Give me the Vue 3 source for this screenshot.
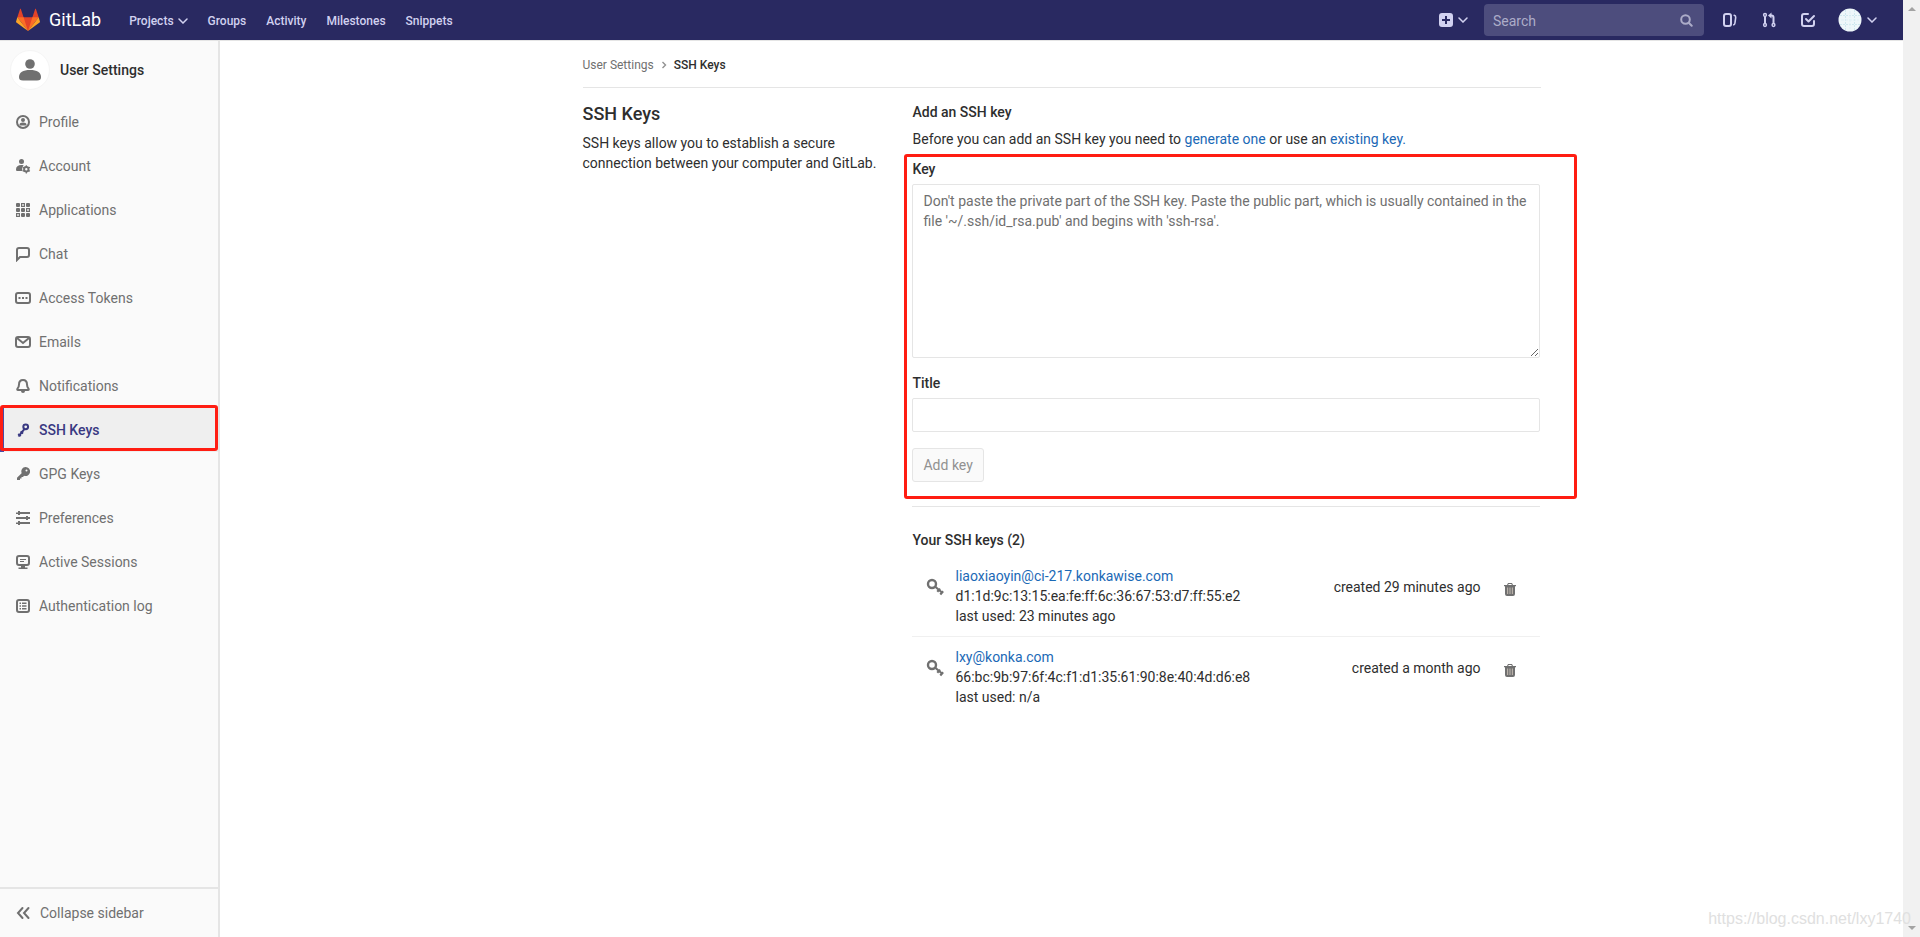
<script setup>
const navLinks = ['Groups', 'Activity', 'Milestones', 'Snippets']

const sections = [
  { icon: 'profile', label: 'Profile' },
  { icon: 'account', label: 'Account' },
  { icon: 'applications', label: 'Applications' },
  { icon: 'chat', label: 'Chat' },
  { icon: 'token', label: 'Access Tokens' },
  { icon: 'mail', label: 'Emails' },
  { icon: 'bell', label: 'Notifications' },
  { icon: 'key', label: 'SSH Keys', active: true },
  { icon: 'key-solid', label: 'GPG Keys' },
  { icon: 'preferences', label: 'Preferences' },
  { icon: 'monitor', label: 'Active Sessions' },
  { icon: 'log', label: 'Authentication log' },
]

const keys = [
  {
    title: 'liaoxiaoyin@ci-217.konkawise.com',
    fingerprint: 'd1:1d:9c:13:15:ea:fe:ff:6c:36:67:53:d7:ff:55:e2',
    used: '23 minutes ago',
    created: '29 minutes ago',
  },
  {
    title: 'lxy@konka.com',
    fingerprint: '66:bc:9b:97:6f:4c:f1:d1:35:61:90:8e:40:4d:d6:e8',
    used: 'n/a',
    created: 'a month ago',
  },
]
</script>

<template>
  <div class="window">
    <div class="page">
      <header class="navbar">
        <a class="brand" href="#">
          <svg width="24" height="24" viewBox="0 0 36 36" aria-hidden="true">
            <path fill="#e24329" d="M2 14l9.38 9v-9l-4-12.28c-.205-.632-1.176-.632-1.38 0z" />
            <path fill="#e24329" d="M34 14l-9.38 9v-9l4-12.28c.205-.632 1.176-.632 1.38 0z" />
            <path fill="#e24329" d="M18 34.38 3 14h30z" />
            <path fill="#fc6d26" d="M18 34.38 11.38 14H2l6 7.5zM18 34.38 24.62 14H34l-6 7.5z" />
            <path fill="#fca326" d="M2 14 .1 20.16c-.18.565 0 1.2.5 1.56l17.42 12.66zM34 14l1.9 6.16c.18.565 0 1.2-.5 1.56L18 34.38z" />
          </svg>
          <span>GitLab</span>
        </a>
        <nav class="main-links" aria-label="Main">
          <button type="button" class="nav-button">
            Projects
            <svg class="caret" width="10" height="6" viewBox="0 0 10 6" aria-hidden="true"><path d="M1 1l4 4 4-4" /></svg>
          </button>
          <a v-for="link in navLinks" :key="link" href="#">{{ link }}</a>
        </nav>
        <div class="tools">
          <button type="button" class="nav-button new" aria-label="New">
            <svg width="14" height="14" viewBox="0 0 14 14" aria-hidden="true">
              <path fill="#d1d1f0" fill-rule="evenodd" d="M3 0h8a3 3 0 0 1 3 3v8a3 3 0 0 1-3 3H3a3 3 0 0 1-3-3V3a3 3 0 0 1 3-3zm3 6H3v2h3v3h2V8h3V6H8V3H6z" />
            </svg>
            <svg class="caret" width="10" height="6" viewBox="0 0 10 6" aria-hidden="true"><path d="M1 1l4 4 4-4" /></svg>
          </button>
          <form class="search" @submit.prevent>
            <input type="text" placeholder="Search" aria-label="Search" />
            <svg width="13" height="13" viewBox="0 0 13 13" aria-hidden="true" fill="none" stroke="#acacc8" stroke-width="2">
              <circle cx="5.5" cy="5.5" r="4.3" /><path d="M8.7 8.7l3 3" stroke-linecap="round" />
            </svg>
          </form>
          <div class="shortcuts">
            <a href="#" aria-label="Issues">
              <svg width="16" height="16" viewBox="0 0 16 16" fill="none" stroke="#d1d1f0" stroke-width="2" stroke-linecap="round" aria-hidden="true">
                <rect x="2" y="2" width="7" height="12" rx="2" /><path d="M12.2 3.3c1.2.3 1.6 1 1.5 2.200L13 10.700c-.1 1.100-.5 1.800-1.200 2.100" stroke-width="1.600" />
              </svg>
            </a>
            <a href="#" aria-label="Merge requests">
              <svg width="16" height="16" viewBox="0 0 16 16" fill="none" stroke="#d1d1f0" stroke-width="1.5" aria-hidden="true">
                <circle cx="4" cy="3" r="1.4" /><circle cx="4" cy="13" r="1.4" /><circle cx="12.500" cy="13" r="1.4" />
                <path d="M4 4.500v7M12.500 11.500V5.500a2 2 0 0 0-2-2H9" stroke-width="2" /><path fill="#d1d1f0" stroke="none" d="M10.500.500v6l-3.500-3z" />
              </svg>
            </a>
            <a href="#" aria-label="Todos">
              <svg width="16" height="16" viewBox="0 0 16 16" fill="none" stroke="#d1d1f0" stroke-width="2" stroke-linecap="round" stroke-linejoin="round" aria-hidden="true">
                <path d="M8 2H4a2 2 0 0 0-2 2v8a2 2 0 0 0 2 2h8a2 2 0 0 0 2-2V9" /><path d="M6 7l2.500 2.500L14 4" />
              </svg>
            </a>
          </div>
          <button type="button" class="nav-button user" aria-label="Account menu">
            <svg width="24" height="24" viewBox="0 0 24 24" aria-hidden="true">
              <circle cx="12" cy="12" r="11.500" fill="#eef7fa" />
              <path stroke="#cfe8ef" stroke-dasharray="2 1" d="M7.500 2v20M16.500 2v20M2 7.500h20M2 16.500h20" />
              <path stroke="#dff0f5" stroke-dasharray="3 1" d="M12 3v18M3 12h18" />
            </svg>
            <svg class="caret" width="10" height="6" viewBox="0 0 10 6" aria-hidden="true"><path d="M1 1l4 4 4-4" /></svg>
          </button>
        </div>
      </header>

      <div class="body">
        <aside class="sidebar">
          <a class="context" href="#">
            <span class="avatar">
              <svg width="22" height="22" viewBox="0 0 22 22" fill="#707070" aria-hidden="true">
                <circle cx="11" cy="5" r="4.800" /><path d="M0 18c0-4.500 4-7 11-7s11 2.500 11 7c0 2.500-1 3.500-4 3.500H4c-3 0-4-1-4-3.500z" />
              </svg>
            </span>
            User Settings
          </a>
          <ul class="sections">
            <li v-for="item in sections" :key="item.label">
              <a href="#" :class="{ active: item.active }">
                <svg width="16" height="16" viewBox="0 0 16 16" aria-hidden="true">
                  <template v-if="item.icon === 'profile'">
                    <circle class="line" cx="8" cy="8" r="6" /><circle cx="8" cy="6" r="2" />
                    <path d="M4.500 10.500C4.500 9.200 5.800 8.500 8 8.500s3.500.7 3.500 2c0 .8-.4 1-1 1h-5c-.6 0-1-.2-1-1z" />
                  </template>
                  <template v-else-if="item.icon === 'account'">
                    <circle cx="6.500" cy="3.500" r="2.500" />
                    <path d="M1 11.500C1 8.500 3 7 6.300 7c1 0 1.700.1 2.400.4C7.400 8.500 6.800 10.500 7.500 13H2.500c-1 0-1.500-.5-1.500-1.500z" />
                    <circle class="line" cx="11.300" cy="11.300" r="2.200" />
                    <path class="line thin" d="M11.300 7.200v1.500M11.300 13.900v1.500M7.700 9.300l1.300.7M13.600 12.600l1.300.7M7.700 13.300l1.300-.7M13.600 10l1.300-.7" />
                  </template>
                  <template v-else-if="item.icon === 'applications'">
                    <rect x="1" y="1" width="4" height="4" rx="1" /><rect class="line thin" x="6.600" y="1.600" width="2.800" height="2.800" /><rect x="11" y="1" width="4" height="4" rx="1" />
                    <rect x="1" y="6" width="4" height="4" rx="1" /><rect x="6" y="6" width="4" height="4" rx="1" /><rect class="line thin" x="11.600" y="6.600" width="2.800" height="2.800" />
                    <rect class="line thin" x="1.600" y="11.600" width="2.800" height="2.800" /><rect x="6" y="11" width="4" height="4" rx="1" /><rect x="11" y="11" width="4" height="4" rx="1" />
                  </template>
                  <path v-else-if="item.icon === 'chat'" class="line" d="M2 14V4a2 2 0 0 1 2-2h8a2 2 0 0 1 2 2v5a2 2 0 0 1-2 2H5z" />
                  <template v-else-if="item.icon === 'token'">
                    <rect class="line" x="1" y="3" width="14" height="10" rx="2" /><path d="M3.500 7h2v2h-2zM7 7h2v2H7zM10.500 7h2v2h-2z" />
                  </template>
                  <template v-else-if="item.icon === 'mail'">
                    <rect class="line" x="1" y="3" width="14" height="10" rx="2" /><path class="line" d="M2 4l6 5 6-5" />
                  </template>
                  <template v-else-if="item.icon === 'bell'">
                    <path class="line" d="M8 2C5.500 2 4 4 4 6.500c0 2-.5 3-1.500 4.200-.5.600-.300 1.300.500 1.300h10c.8 0 1-.7.500-1.300-1-1.200-1.500-2.200-1.500-4.200C12 4 10.500 2 8 2z" />
                    <path d="M6 13h4a2 2 0 0 1-4 0z" />
                  </template>
                  <template v-else-if="item.icon === 'key'">
                    <circle class="line" cx="10.700" cy="4.800" r="2.400" /><path class="line" d="M9.500 6.800L3.500 14.500M5.500 9.500l2.600 2M3.200 12l2.600 2" />
                  </template>
                  <template v-else-if="item.icon === 'key-solid'">
                    <path fill-rule="evenodd" d="M10.500 1a4.500 4.500 0 1 1-1.500 8.700L8 11H6.500v1.500H5V14H2V11.800l4.600-4.600A4.500 4.500 0 0 1 10.500 1zm1 2.500a1 1 0 1 0 0 2 1 1 0 0 0 0-2z" />
                  </template>
                  <path v-else-if="item.icon === 'preferences'" d="M5 2h10v2H5v1H3V4H1V2.600h2V1h2zM11 7V6h2v1h2v2h-2v1h-2V9H1V7zM5 12h10v2H5v1H3v-1H1v-1.400h2V11h2z" />
                  <template v-else-if="item.icon === 'monitor'">
                    <rect class="line" x="2" y="2" width="12" height="9" rx="2" /><path d="M5 5h6v1H5zM5 7h4v1H5zM6 12h4v1.500h2.500V15h-9v-1.500H6z" />
                  </template>
                  <template v-else>
                    <rect class="line" x="2" y="2" width="12" height="12" rx="2" />
                    <path d="M4.500 4.500H6V6H4.500zM7 4.500h4.500V6H7zM4.500 7.300H6v1.500H4.500zM7 7.300h4.500v1.500H7zM4.500 10H6v1.500H4.500zM7 10h4.500v1.500H7z" />
                  </template>
                </svg>
                {{ item.label }}
              </a>
              <span v-if="item.active" class="mark"></span>
            </li>
          </ul>
          <button type="button" class="collapse">
            <svg width="16" height="16" viewBox="0 0 16 16" aria-hidden="true"><path class="line" stroke-linecap="round" d="M7.500 3L3 8l4.500 5M13.500 3L9 8l4.500 5" /></svg>
            Collapse sidebar
          </button>
        </aside>

        <main class="content">
          <div class="container">
            <nav class="breadcrumbs" aria-label="Breadcrumb">
              <a href="#">User Settings</a>
              <svg width="6" height="8" viewBox="0 0 6 8" aria-hidden="true"><path d="M1.500 1l3 3-3 3" fill="none" stroke="#919191" stroke-width="1.400" /></svg>
              <a class="current" href="#">SSH Keys</a>
            </nav>
            <div class="columns">
              <section class="intro">
                <h1>SSH Keys</h1>
                <p>SSH keys allow you to establish a secure connection between your computer and GitLab.</p>
              </section>
              <section class="settings">
                <h2>Add an SSH key</h2>
                <p class="hint">Before you can add an SSH key you need to <a href="#">generate one</a> or use an <a href="#">existing key.</a></p>
                <form class="key-form" @submit.prevent>
                  <label for="key">Key</label>
                  <textarea id="key" placeholder="Don't paste the private part of the SSH key. Paste the public part, which is usually contained in the file '~/.ssh/id_rsa.pub' and begins with 'ssh-rsa'."></textarea>
                  <label for="title">Title</label>
                  <input id="title" type="text" />
                  <button type="submit" disabled>Add key</button>
                  <span class="mark"></span>
                </form>
                <hr />
                <h2>Your SSH keys (2)</h2>
                <ul class="keys">
                  <li v-for="entry in keys" :key="entry.fingerprint">
                    <svg class="key-icon" width="18" height="18" viewBox="0 0 18 18" fill="none" stroke="#707070" aria-hidden="true">
                      <circle cx="6" cy="6" r="4" stroke-width="2.400" /><path stroke-width="2.200" d="M9 8.500l7.500 6.500M11.300 13.800l2.800-3.200M14.300 16.500l2.800-3.200" />
                    </svg>
                    <div class="info">
                      <a href="#">{{ entry.title }}</a>
                      <div>{{ entry.fingerprint }}</div>
                      <div>last used: {{ entry.used }}</div>
                    </div>
                    <span class="created">created {{ entry.created }}</span>
                    <button type="button" aria-label="Remove">
                      <svg width="12" height="13" viewBox="0 0 12 13" aria-hidden="true">
                        <path fill="#b8b0a8" d="M3 4h6v7H3z" />
                        <path fill="#707070" fill-rule="evenodd" d="M4 0h4l1 2h3v1.300h-1V11a2 2 0 0 1-2 2H3a2 2 0 0 1-2-2V3.300H0V2h3zm.6 1l-.4 1h3.600l-.4-1zM3 4.500V11h1.200V4.500zm2.400 0V11h1.200V4.500zm2.400 0V11H9V4.500z" />
                      </svg>
                    </button>
                  </li>
                </ul>
              </section>
            </div>
          </div>
        </main>
      </div>
    </div>
    <div class="scrollbar" aria-hidden="true"><i class="up"></i><i class="down"></i></div>
    <div class="watermark">https://blog.csdn.net/lxy1740</div>
  </div>
</template>

<style>
body {
  margin: 0;
}
</style>

<style scoped>
.window {
  display: flex;
  min-height: 100vh;
  position: relative;
  font: 14px/20px Roboto, "Noto Sans", sans-serif;
  color: #2e2e2e;
  background: #fff;
}
.window *,
.window *::before {
  box-sizing: border-box;
}
a {
  color: #1b69b6;
  text-decoration: none;
}
button,
input,
textarea {
  font: inherit;
}
button {
  cursor: pointer;
}
ul {
  list-style: none;
  margin: 0;
  padding: 0;
}
svg {
  flex: none;
}
.page {
  flex: 1;
  min-width: 0;
  display: flex;
  flex-direction: column;
}
.navbar {
  height: 40px;
  padding: 0 26px 0 16px;
  display: flex;
  align-items: center;
  background: #292961;
}
.brand {
  display: flex;
  align-items: center;
  gap: 9px;
  color: #fff;
  font-size: 18px;
}
.main-links {
  display: flex;
  align-items: center;
  gap: 20px;
  margin-left: 28px;
  padding-top: 1px;
  font-size: 12px;
  font-weight: 500;
}
.main-links a,
.nav-button {
  color: #d1d1f0;
}
.nav-button {
  display: flex;
  align-items: center;
  gap: 5px;
  padding: 0;
  border: 0;
  background: none;
}
.main-links .nav-button {
  gap: 4px;
}
.caret path {
  fill: none;
  stroke: #d1d1f0;
  stroke-width: 1.5;
  stroke-linecap: round;
}
.tools {
  display: flex;
  align-items: center;
  margin-left: auto;
}
.search {
  display: flex;
  align-items: center;
  width: 220px;
  height: 32px;
  margin: 0 18px 0 16px;
  padding: 0 11px 0 9px;
  border-radius: 4px;
  background: #4d4d7d;
}
.search input {
  flex: 1;
  min-width: 0;
  padding: 1px 0 0;
  border: 0;
  outline: 0;
  background: none;
  color: #fff;
}
.search input::placeholder {
  color: #acacc8;
  opacity: 1;
}
.shortcuts {
  display: flex;
  gap: 23px;
}
.shortcuts a {
  display: flex;
}
.user {
  margin-left: 22px;
}
.body {
  flex: 1;
  display: flex;
  border-top: 1px solid #e5e5e5;
}
.sidebar {
  flex: none;
  width: 220px;
  display: flex;
  flex-direction: column;
  border-right: 2px solid #e5e5e5;
  background: #fafafa;
}
.context {
  display: flex;
  align-items: center;
  gap: 10px;
  height: 58px;
  margin-bottom: 1px;
  padding-left: 10px;
  color: #2e2e2e;
  font-weight: 500;
}
.avatar {
  display: grid;
  place-items: center;
  width: 40px;
  height: 40px;
  border: 1px solid #f5f5f5;
  border-radius: 50%;
  background: #fff;
}
.sections li {
  position: relative;
}
.sections a {
  display: flex;
  align-items: center;
  gap: 8px;
  height: 44px;
  padding-left: 15px;
  color: #707070;
}
.sections svg,
.collapse svg {
  fill: currentColor;
}
.line {
  fill: none;
  stroke: currentColor;
  stroke-width: 2;
}
.thin {
  stroke-width: 1.2;
}
.sections .active {
  background: #efefef;
  color: #393982;
  font-weight: 500;
  box-shadow: inset 4px 0 #4b4ba3;
}
.mark {
  position: absolute;
  border: 3px solid #ff1d12;
  border-radius: 3px;
  pointer-events: none;
}
.sections .mark {
  inset: -3px 0 1px 0;
}
.collapse {
  display: flex;
  align-items: center;
  gap: 9px;
  height: 50px;
  margin-top: auto;
  padding: 0 0 0 15px;
  border: 0;
  border-top: 2px solid #e5e5e5;
  background: none;
  color: #707070;
}
.content {
  flex: 1;
  min-width: 0;
}
.container {
  max-width: 990px;
  margin: 0 auto;
  padding: 0 16px;
  box-sizing: border-box;
}
.breadcrumbs {
  display: flex;
  align-items: center;
  gap: 7px;
  height: 47px;
  padding-top: 2px;
  border-bottom: 1px solid #e5e5e5;
  font-size: 12px;
}
.breadcrumbs a {
  color: #707070;
}
.breadcrumbs .current {
  color: #2e2e2e;
  font-weight: 500;
}
.columns {
  display: flex;
  margin: 0 -16px;
}
.columns > section {
  padding: 14px 16px 0;
}
.intro {
  width: 33.3333%;
}
.settings {
  width: 66.6667%;
}
h1 {
  margin: 0;
  font-size: 18px;
  line-height: 24px;
  font-weight: 500;
}
h2 {
  margin: 0;
  font-size: 14px;
  font-weight: 500;
}
.intro p {
  margin: 7px 0 0;
}
.hint {
  margin: 7px 0 0;
}
.key-form {
  position: relative;
  display: flex;
  flex-direction: column;
  align-items: flex-start;
  padding-top: 10px;
}
.key-form label {
  padding-bottom: 5px;
  font-weight: 500;
}
.key-form textarea,
.key-form input {
  width: 100%;
  padding: 6px 10px;
  border: 1px solid #e5e5e5;
  border-radius: 2px;
  background: #fff;
  color: #2e2e2e;
}
.key-form textarea {
  height: 174px;
  resize: vertical;
}
.key-form textarea::placeholder {
  color: #707070;
}
.key-form textarea + label {
  margin-top: 15px;
}
.key-form input {
  height: 34px;
}
.key-form button {
  height: 34px;
  margin-top: 16px;
  padding: 0 10px;
  border: 1px solid #e5e5e5;
  border-radius: 3px;
  background: #fafafa;
  color: #919191;
}
.key-form .mark {
  inset: 5px -37px -17px -8px;
}
hr {
  margin: 24px 0 23px;
  border: 0;
  border-top: 1px solid #e5e5e5;
}
.keys {
  margin-top: 6px;
}
.keys li {
  display: flex;
  align-items: flex-start;
  padding: 10px 24px 10px 14px;
}
.keys li + li {
  border-top: 1px solid #f0f0f0;
}
.key-icon {
  margin: 12px 11px 0 0;
}
.created {
  margin: 11px 24px 0 auto;
}
.keys button {
  display: flex;
  margin-top: 17px;
  padding: 0;
  border: 0;
  background: none;
}
.scrollbar {
  flex: none;
  width: 17px;
  display: flex;
  flex-direction: column;
  justify-content: space-between;
  align-items: center;
  padding: 7px 0;
  background: #f1f1f1;
}
.scrollbar i {
  border: 4px solid transparent;
}
.scrollbar .up {
  border-top: 0;
  border-bottom-color: #a3a3a3;
}
.scrollbar .down {
  border-bottom: 0;
  border-top-color: #a3a3a3;
}
.watermark {
  position: absolute;
  right: 9px;
  bottom: 8px;
  font: 16px/20px "Liberation Sans", Arial, sans-serif;
  color: #e0e0e0;
}
</style>
